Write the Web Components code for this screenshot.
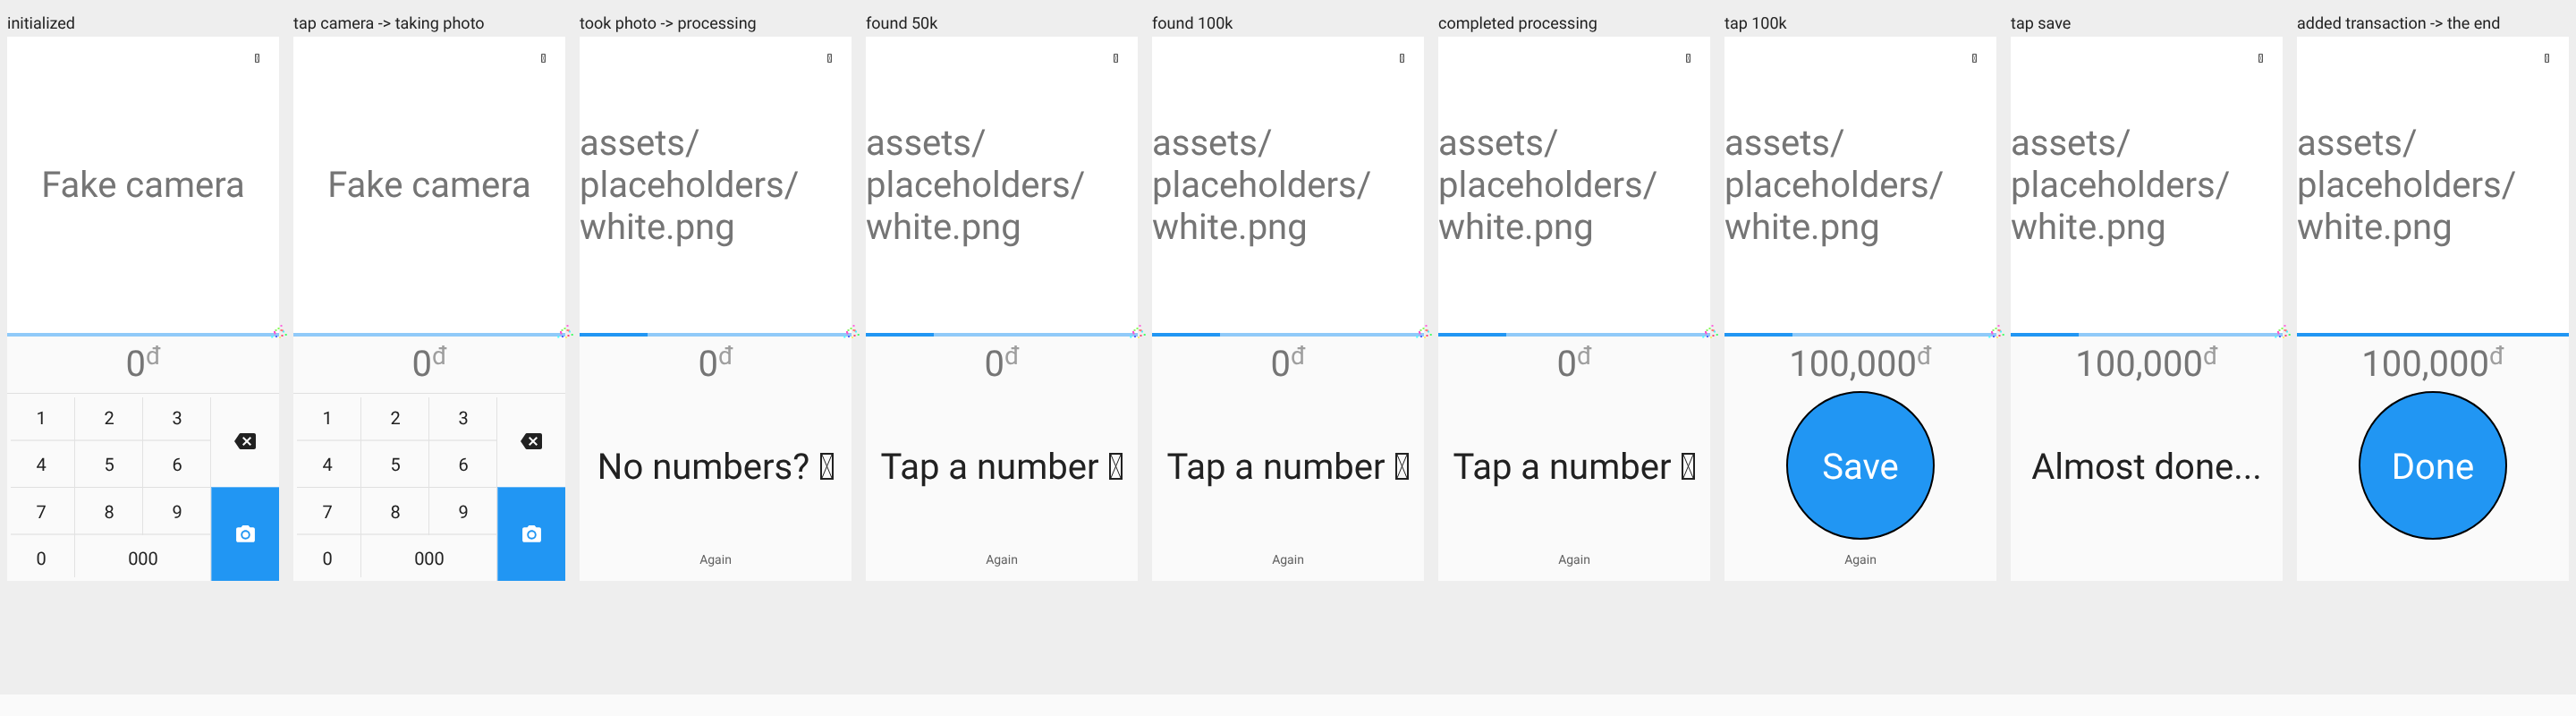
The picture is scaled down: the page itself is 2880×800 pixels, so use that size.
<!doctype html>
<html>
<head>
<meta charset="utf-8">
<title>flow</title>
<style>
html, body { margin: 0; height: 100%; }
body {
  display: flex;
  flex-direction: column;
  background: #eeeeee;
  font-family: Roboto, sans-serif;
  text-rendering: geometricPrecision;
  overflow: hidden;
}
main { display: flex; height: 776px; flex: none; will-change: transform; }
footer { flex: 1; background: #fafafa; }
</style>
</head>
<body>
<main id="strip"></main>
<footer></footer>

<script>
const icons = {
  backspace: `<svg width="24" height="24" viewBox="0 0 24 24"><path fill="#212121" d="M22 3H7c-.69 0-1.23.35-1.59.88L0 12l5.41 8.11c.36.53.9.89 1.59.89h15c1.1 0 2-.9 2-2V5c0-1.1-.9-2-2-2zm-3 12.59L17.59 17 14 13.41 10.41 17 9 15.59 12.59 12 9 8.41 10.41 7 14 10.59 17.59 7 19 8.41 15.41 12 19 15.59z"/></svg>`,
  camera: `<svg width="25" height="25" viewBox="0 0 24 24"><circle cx="12" cy="12" r="3.2" fill="#fff"/><path fill="#fff" d="M9 2L7.17 4H4c-1.1 0-2 .9-2 2v12c0 1.1.9 2 2 2h16c1.1 0 2-.9 2-2V6c0-1.1-.9-2-2-2h-3.17L15 2H9zm3 15c-2.76 0-5-2.24-5-5s2.24-5 5-5 5 2.24 5 5-2.24 5-5 5z"/></svg>`
};

// box with a cross, the reference shows it where the emoji did not load
class TofuGlyph extends HTMLElement {
  constructor() {
    super();
    const w = this.getAttribute('w') ?? 15;
    const h = this.getAttribute('h') ?? 30;
    const edge = w > 8 ? 2 : 1;
    this.attachShadow({ mode: 'open' }).innerHTML = `<style>
:host { display: inline-block; line-height: 0; }
svg { display: block; overflow: visible; }
</style>
<svg viewBox="0 0 ${w} ${h}" width="${w}" height="${h}">
  <path fill="none" stroke="currentColor" stroke-width="${edge}" d="M${edge / 2} ${edge / 2}H${w - edge / 2}V${h - edge / 2}H${edge / 2}Z"/>
  <path fill="none" stroke="currentColor" stroke-width="${edge / 2}" d="M${edge} ${edge}L${w - edge} ${h - edge}M${w - edge} ${edge}L${edge} ${h - edge}"/>
</svg>`;
  }
}

// small coloured specks the debug overlay leaves at the end of the bar
class DebugSpecks extends HTMLElement {
  constructor() {
    super();
    const specks = [
      [13.5, 2, '#ff66dd'], [10.5, 5, '#88ff55'], [7.5, 7, '#88ee66'], [13.5, 7, '#ff7777'], [15, 7.5, '#ff7777'],
      [6, 9, '#ff55cc'], [6.5, 10.5, '#ff55cc'], [16, 8.5, '#55eeff'], [18.7, 12, '#44ff66'], [14.5, 13, '#ff4477'],
      [3.3, 14.5, '#44ffff'], [8, 14, '#5566ff'], [12, 15, '#ffee77']
    ];
    this.attachShadow({ mode: 'open' }).innerHTML = `<style>
:host { position: absolute; right: -12px; bottom: -5px; width: 24px; height: 20px; pointer-events: none; }
svg { display: block; }
</style>
<svg width="24" height="20" viewBox="0 0 24 20">${specks.map(([x, y, c]) => `<rect x="${x}" y="${y}" width="2" height="2" fill="${c}"/>`).join('')}</svg>`;
  }
}

class NumberPad extends HTMLElement {
  constructor() {
    super();
    const key = (text, cls) => `<div class="k ${cls}">${text}</div>`;
    this.attachShadow({ mode: 'open' }).innerHTML = `<style>
:host {
  display: grid;
  flex: 1;
  grid-template-columns: repeat(4, 76px);
  grid-template-rows: 53px 52px 53px 51px;
  border-top: 1px solid #e0e0e0;
}
.k {
  display: flex;
  align-items: center;
  justify-content: center;
  font-size: 20px;
  color: #212121;
  --v-size: 1px 100%;
  --v-pos: right top;
  --h-size: 100% 2px;
  --h-color: #ebebeb;
  background-image: linear-gradient(#e2e2e2, #e2e2e2), linear-gradient(var(--h-color), var(--h-color));
  background-repeat: no-repeat;
  background-size: var(--v-size), var(--h-size);
  background-position: var(--v-pos), right bottom;
}
.top { --v-size: 1px calc(100% - 4px); --v-pos: right bottom; }
.mid { --h-size: 100% 1px; --h-color: #e0e0e0; }
.left { --h-size: calc(100% - 4px) 2px; }
.left.mid { --h-size: calc(100% - 4px) 1px; }
.end { --h-size: 0 0; }
.end.left { --v-size: 1px calc(100% - 4px); }
.zeros { grid-column: 2 / span 2; }
.del { grid-row: 1 / span 2; grid-column: 4; background-image: none; }
.cam {
  grid-row: 3 / span 2;
  grid-column: 4;
  margin-top: -1px;
  background: #2196f3;
  border-top: 1px solid #64b5f6;
  border-left: 1px solid #64b5f6;
}
</style>
${key('1', 'top left')}${key('2', 'top')}${key('3', 'top')}
${key(icons.backspace, 'del')}
${key('4', 'mid left')}${key('5', 'mid')}${key('6', 'mid')}
${key('7', 'left')}${key('8', '')}${key('9', '')}
${key(icons.camera, 'cam')}
${key('0', 'end left')}${key('000', 'end zeros')}`;
  }
}

class PhoneScreen extends HTMLElement {
  constructor() {
    super();
    const amount = this.getAttribute('amount') ?? '0';
    const progress = this.getAttribute('progress') ?? '0';
    const specks = progress === '100' ? '' : '<debug-specks></debug-specks>';
    this.attachShadow({ mode: 'open' }).innerHTML = `<style>
:host {
  display: flex;
  flex-direction: column;
  width: 304px;
  height: 608px;
  background: #fafafa;
}
.camera {
  flex: none;
  height: 331px;
  background: #fff;
  display: flex;
  align-items: center;
  position: relative;
  font-size: 40px;
  color: #757575;
}
.flash { position: absolute; top: 19px; right: 22px; color: #555; }
.bar { flex: none; height: 4px; background: #90caf9; position: relative; }
.fill { height: 100%; background: #2196f3; width: ${progress}%; }
.amount {
  flex: none;
  height: 63px;
  display: flex;
  justify-content: center;
  font-size: 40px;
  color: #757575;
  line-height: 47px;
  padding-top: 7px;
  box-sizing: border-box;
}
.unit { font-size: 28px; line-height: 33px; color: #9e9e9e; margin-top: -2px; }
.body { flex: 1; display: flex; min-height: 0; flex-direction: column; }
</style>
<div class="camera"><slot name="camera"></slot><tofu-glyph class="flash" w="5" h="10"></tofu-glyph></div>
<div class="bar"><div class="fill"></div>${specks}</div>
<div class="amount">${amount}<span class="unit">đ</span></div>
<div class="body"><slot></slot></div>`;
  }
}

// middle of the screen after the photo: big message or round button, optional Again
class ResultPane extends HTMLElement {
  constructor() {
    super();
    const button = this.getAttribute('button');
    const middle = button
      ? `<div class="round">${button}</div>`
      : `<div class="msg">${this.getAttribute('message')}${this.hasAttribute('glyph') ? '<tofu-glyph></tofu-glyph>' : ''}</div>`;
    this.attachShadow({ mode: 'open' }).innerHTML = `<style>
:host { display: flex; flex-direction: column; flex: 1; align-items: center; }
.mid { height: 166px; margin-top: -2px; flex: none; display: flex; align-items: center; justify-content: center; }
.msg { font-size: 40px; color: #212121; display: flex; align-items: center; gap: 12px; white-space: nowrap; padding-top: 2px; }
.round {
  box-sizing: border-box;
  width: 166px;
  height: 166px;
  border-radius: 50%;
  background: #2196f3;
  border: 2px solid #000;
  color: #fff;
  font-size: 40px;
  padding-top: 2px;
  display: flex;
  align-items: center;
  justify-content: center;
}
.again { font-size: 14px; color: #616161; margin-top: 15px; }
</style>
<div class="mid">${middle}</div>
${this.hasAttribute('again') ? '<div class="again">Again</div>' : ''}`;
  }
}

class FlowStep extends HTMLElement {
  constructor() {
    super();
    this.attachShadow({ mode: 'open' }).innerHTML = `<style>
:host { display: block; width: 304px; padding: 16px 8px 0; flex: none; font-size: 18px; color: #212121; }
.label { height: 25px; line-height: 21px; white-space: nowrap; }
</style>
<div class="label">${this.getAttribute('label')}</div>
<slot></slot>`;
  }
}

customElements.define('tofu-glyph', TofuGlyph);
customElements.define('debug-specks', DebugSpecks);
customElements.define('number-pad', NumberPad);
customElements.define('phone-screen', PhoneScreen);
customElements.define('result-pane', ResultPane);
customElements.define('flow-step', FlowStep);

const asset = '<div slot="camera">assets/<br>placeholders/<br>white.png</div>';
const fake = '<div slot="camera" style="width:100%;text-align:center">Fake camera</div>';
const steps = [
  ['initialized', '0', 0, fake, '<number-pad></number-pad>'],
  ['tap camera -> taking photo', '0', 0, fake, '<number-pad></number-pad>'],
  ['took photo -> processing', '0', 25, asset, '<result-pane message="No numbers?" glyph again></result-pane>'],
  ['found 50k', '0', 25, asset, '<result-pane message="Tap a number" glyph again></result-pane>'],
  ['found 100k', '0', 25, asset, '<result-pane message="Tap a number" glyph again></result-pane>'],
  ['completed processing', '0', 25, asset, '<result-pane message="Tap a number" glyph again></result-pane>'],
  ['tap 100k', '100,000', 25, asset, '<result-pane button="Save" again></result-pane>'],
  ['tap save', '100,000', 25, asset, '<result-pane message="Almost done..."></result-pane>'],
  ['added transaction -> the end', '100,000', 100, asset, '<result-pane button="Done"></result-pane>']
];
document.getElementById('strip').innerHTML = steps.map(([label, amount, progress, cam, body]) => `
<flow-step label="${label.replace('>', '&gt;')}"><phone-screen amount="${amount}" progress="${progress}">${cam}${body}</phone-screen></flow-step>`).join('');
</script>
</body>
</html>
